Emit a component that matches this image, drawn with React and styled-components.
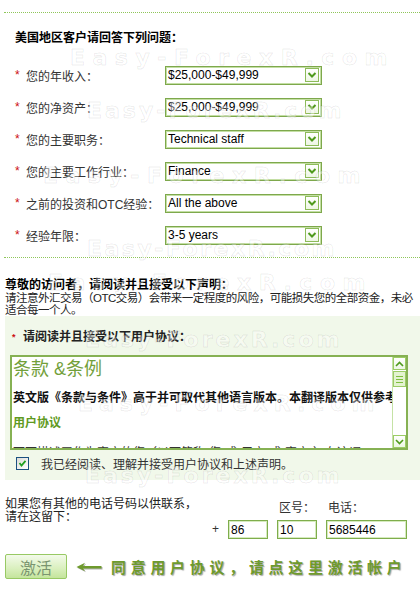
import React from 'react';
import styled, { createGlobalStyle } from 'styled-components';

const GlobalStyle = createGlobalStyle`
  html, body {
    margin: 0;
    padding: 0;
    background: #fff;
  }
  body {
    font-family: "Liberation Sans", "Noto Sans CJK SC", sans-serif;
    font-size: 12px;
    color: #333;
    overflow: hidden;
  }
`;

const questions = [
  { label: '您的年收入：', value: '$25,000-$49,999' },
  { label: '您的净资产：', value: '$25,000-$49,999' },
  { label: '您的主要职务：', value: 'Technical staff' },
  { label: '您的主要工作行业：', value: 'Finance' },
  { label: '之前的投资和OTC经验：', value: 'All the above' },
  { label: '经验年限：', value: '3-5 years' },
];

// faint site watermark repeated down the page
const marks = [
  { top: 47, left: 70, spacing: 7.5 },
  { top: 100, left: 87, spacing: 3 },
  { top: 165, left: 43, spacing: 7.5 },
  { top: 238, left: 87, spacing: 2.5 },
  { top: 272, left: 48, spacing: 7.5 },
  { top: 329, left: 85, spacing: 3 },
  { top: 393, left: 78, spacing: 6 },
  { top: 465, left: 85, spacing: 3 },
];

const App = () => {
  return (
    <Page>
      <GlobalStyle />
      <Divider />

      <Questions>
        <SectionTitle>美国地区客户请回答下列问题：</SectionTitle>
        {questions.map((q) => (
          <QuestionRow key={q.label}>
            <Star>*</Star>
            <Label>{q.label}</Label>
            <SelectBox>
              <span>{q.value}</span>
              <DropButton>
                <svg width="10" height="8" viewBox="0 0 10 8">
                  <path d="M1.5 2 L5 5.5 L8.5 2" fill="none" stroke="#4f9a1c" strokeWidth="2" />
                </svg>
              </DropButton>
            </SelectBox>
          </QuestionRow>
        ))}
      </Questions>

      <Divider $top={6} />

      <Notice>
        <NoticeTitle>尊敬的访问者，请阅读并且接受以下声明：</NoticeTitle>
        <NoticeText>
          请注意外汇交易（OTC交易）会带来一定程度的风险，可能损失您的全部资金，未必
          <br />
          适合每一个人。
        </NoticeText>
      </Notice>

      <AgreementPanel>
        <AgreementTitle>
          <SmallStar>*</SmallStar>请阅读并且接受以下用户协议：
        </AgreementTitle>
        <TermsBox>
          <TermsContent>
            <TermsHeading>条款 &amp;条例</TermsHeading>
            <TermsLead>英文版《条款与条件》高于并可取代其他语言版本。本翻译版本仅供参考。</TermsLead>
            <TermsSub>用户协议</TermsSub>
            <TermsBody>下面描述了作为客户的您（以下简称“您”或“用户”或“客户”）在这词，Easy-Forex</TermsBody>
          </TermsContent>
          <ScrollTrack>
            <ScrollButton>
              <svg width="9" height="6" viewBox="0 0 9 6">
                <path d="M1 5 L4.5 1.5 L8 5" fill="none" stroke="#4f9a1c" strokeWidth="1.6" />
              </svg>
            </ScrollButton>
            <ScrollThumb>
              <Grip />
              <Grip />
              <Grip />
            </ScrollThumb>
            <ScrollSpacer />
            <ScrollButton>
              <svg width="9" height="6" viewBox="0 0 9 6">
                <path d="M1 1 L4.5 4.5 L8 1" fill="none" stroke="#4f9a1c" strokeWidth="1.6" />
              </svg>
            </ScrollButton>
          </ScrollTrack>
        </TermsBox>
        <ConfirmRow>
          <CheckBox>
            <svg width="9" height="9" viewBox="0 0 9 9">
              <path d="M1.5 4 L3.5 6.5 L7.5 1.8" fill="none" stroke="#22a022" strokeWidth="1.8" />
            </svg>
          </CheckBox>
          <span>我已经阅读、理解并接受用户协议和上述声明。</span>
        </ConfirmRow>
      </AgreementPanel>

      <PhoneSection>
        <PhoneNote>
          如果您有其他的电话号码以供联系，
          <br />
          请在这留下：
        </PhoneNote>
        <PhoneGrid>
          <span />
          <span />
          <FieldLabel>区号：</FieldLabel>
          <FieldLabel>电话：</FieldLabel>
          <Plus>+</Plus>
          <TextInput readOnly defaultValue="86" />
          <TextInput readOnly defaultValue="10" />
          <TextInput readOnly defaultValue="5685446" />
        </PhoneGrid>
      </PhoneSection>

      <ActionRow>
        <ActivateButton type="button">激活</ActivateButton>
        <ArrowIcon width="26" height="10" viewBox="0 0 26 10">
          <path d="M0.5 5 L9 0.8 L7 4 L25.5 4 L25.5 6.4 L7 6.4 L9 9.2 Z" fill="#6e9a2d" />
        </ArrowIcon>
        <Slogan>同意用户协议，请点这里激活帐户</Slogan>
      </ActionRow>

      <WatermarkLayer aria-hidden="true">
        {marks.map((m) => (
          <Watermark key={m.top} $top={m.top} $left={m.left} $spacing={m.spacing}>
            Easy-ForexR.com
          </Watermark>
        ))}
      </WatermarkLayer>
    </Page>
  );
};

const Page = styled.div`
  position: relative;
  width: 420px;
  height: 600px;
  padding-top: 12px;
  box-sizing: border-box;
`;

const Divider = styled.div`
  margin: ${(p) => p.$top || 0}px 0 0 4px;
  border-top: 1px dotted #8fc65a;
`;

const Questions = styled.section`
  padding: 17px 0 0 15px;
`;

const SectionTitle = styled.h3`
  margin: 0 0 13px;
  font-size: 12px;
  line-height: 16px;
  font-weight: bold;
  color: #000;
`;

const QuestionRow = styled.div`
  display: flex;
  align-items: center;
  height: 32px;
`;

const Star = styled.span`
  width: 11px;
  color: #cc1111;
  font-size: 12px;
`;

const Label = styled.span`
  width: 139px;
  color: #333;
`;

const SelectBox = styled.div`
  width: 157px;
  height: 19px;
  box-sizing: border-box;
  display: flex;
  align-items: center;
  justify-content: space-between;
  padding: 0 2px 0 2px;
  border: 1px solid #7ea84c;
  box-shadow: inset 0 0 0 1px #c4dfa4;
  background: #fff;
  font-size: 12px;
  color: #000;
`;

const DropButton = styled.span`
  width: 14px;
  height: 14px;
  box-sizing: border-box;
  display: flex;
  align-items: center;
  justify-content: center;
  border: 1px solid #8dbb5a;
  background: linear-gradient(#ffffff, #eef6e4);
`;

const Notice = styled.section`
  padding: 21px 0 0 5px;
`;

const NoticeTitle = styled.h4`
  margin: 0;
  font-size: 12px;
  line-height: 13px;
  font-weight: bold;
  color: #000;
`;

const NoticeText = styled.p`
  margin: 0;
  font-size: 11.5px;
  line-height: 12px;
  letter-spacing: -0.5px;
  white-space: nowrap;
  color: #222;
`;

const AgreementPanel = styled.section`
  margin-left: 5px;
  background: #f1f8ea;
  padding: 14px 12px 10px 5px;
`;

const AgreementTitle = styled.div`
  padding-left: 2px;
  line-height: 14px;
  font-weight: bold;
  color: #222;
`;

const SmallStar = styled.span`
  display: inline-block;
  width: 11px;
  color: #cc1111;
  font-size: 9px;
  vertical-align: top;
`;

const TermsBox = styled.div`
  margin-top: 11px;
  width: 398px;
  height: 95px;
  box-sizing: border-box;
  display: flex;
  border: 2px solid #86b153;
  background: #fff;
  overflow: hidden;
`;

const TermsContent = styled.div`
  flex: 1;
  padding-left: 1px;
  overflow: hidden;
  white-space: nowrap;
`;

const TermsHeading = styled.div`
  font-size: 18px;
  line-height: 24px;
  color: #72a03a;
`;

const TermsLead = styled.div`
  margin-top: 10px;
  line-height: 14px;
  font-weight: bold;
  color: #111;
`;

const TermsSub = styled.div`
  margin-top: 11px;
  line-height: 14px;
  font-weight: bold;
  color: #5f9a22;
`;

const TermsBody = styled.div`
  margin-top: 16px;
  line-height: 14px;
  color: #333;
`;

const ScrollTrack = styled.div`
  width: 13px;
  display: flex;
  flex-direction: column;
  border-left: 1px solid #c5e2a5;
  background: #fff;
`;

const ScrollButton = styled.div`
  height: 13px;
  box-sizing: border-box;
  display: flex;
  align-items: center;
  justify-content: center;
  border: 1px solid #9ccc66;
  background: linear-gradient(#ffffff, #eef7e4);
`;

const ScrollThumb = styled.div`
  height: 16px;
  margin-top: 1px;
  box-sizing: border-box;
  display: flex;
  flex-direction: column;
  justify-content: center;
  align-items: center;
  gap: 2px;
  border: 1px solid #9ccc66;
  background: #e4f3d0;
`;

const Grip = styled.span`
  width: 7px;
  height: 1px;
  background: #7fbf3f;
`;

const ScrollSpacer = styled.div`
  flex: 1;
`;

const ConfirmRow = styled.label`
  margin-top: 6px;
  display: flex;
  align-items: center;
  height: 14px;
  padding-left: 6px;
  color: #333;
`;

const CheckBox = styled.span`
  width: 13px;
  height: 13px;
  box-sizing: border-box;
  margin-right: 12px;
  display: flex;
  align-items: center;
  justify-content: center;
  border: 1px solid #1c5180;
  background: linear-gradient(135deg, #dcdcd7, #ffffff);
`;

const PhoneSection = styled.section`
  margin-top: 18px;
  padding-left: 5px;
  display: flex;
`;

const PhoneNote = styled.div`
  width: 202px;
  line-height: 13px;
  color: #222;
`;

const PhoneGrid = styled.div`
  padding-top: 3px;
  display: grid;
  grid-template-columns: 12px 40px 40px 81px;
  grid-template-rows: 14px 19px;
  column-gap: 9px;
  row-gap: 5px;
`;

const FieldLabel = styled.span`
  padding-left: 2px;
  line-height: 14px;
  color: #333;
`;

const Plus = styled.span`
  text-align: right;
  line-height: 19px;
  color: #333;
`;

const TextInput = styled.input`
  width: 100%;
  height: 19px;
  box-sizing: border-box;
  margin: 0;
  padding: 0 2px;
  border: 1px solid #7fad4c;
  box-shadow: inset 0 0 0 1px #d6ebbf;
  font-family: "Liberation Sans", sans-serif;
  font-size: 12px;
  color: #000;
  background: #fff;
  outline: none;
`;

const ActionRow = styled.div`
  margin-top: 15px;
  padding-left: 5px;
  display: flex;
  align-items: center;
`;

const ActivateButton = styled.button`
  width: 62px;
  height: 25px;
  box-sizing: border-box;
  padding: 0;
  border: 1px solid #98c964;
  border-radius: 2px;
  background: linear-gradient(#f3faea, #d9efbd 60%, #c4e59c);
  font-family: "Noto Sans CJK SC", sans-serif;
  font-size: 16px;
  line-height: 22px;
  color: #7a9570;
`;

const ArrowIcon = styled.svg`
  margin-left: 9px;
  filter: drop-shadow(1px 1px 0.5px rgba(0, 0, 0, 0.3));
`;

const Slogan = styled.span`
  margin-left: 9px;
  font-family: "Noto Sans CJK SC", sans-serif;
  font-size: 15px;
  font-weight: bold;
  letter-spacing: 4.7px;
  color: #6e9a2d;
  text-shadow: 1px 1px 1px rgba(0, 0, 0, 0.35);
  white-space: nowrap;
`;

const WatermarkLayer = styled.div`
  position: absolute;
  inset: 0;
  pointer-events: none;
  overflow: hidden;
`;

const Watermark = styled.span`
  position: absolute;
  top: ${(p) => p.$top}px;
  left: ${(p) => p.$left}px;
  font-family: "DejaVu Sans", sans-serif;
  font-size: 22px;
  line-height: 22px;
  font-weight: bold;
  letter-spacing: ${(p) => p.$spacing}px;
  white-space: nowrap;
  color: rgba(255, 255, 255, 0.4);
  -webkit-text-stroke: 1px rgba(0, 0, 0, 0.08);
`;

export default App;
